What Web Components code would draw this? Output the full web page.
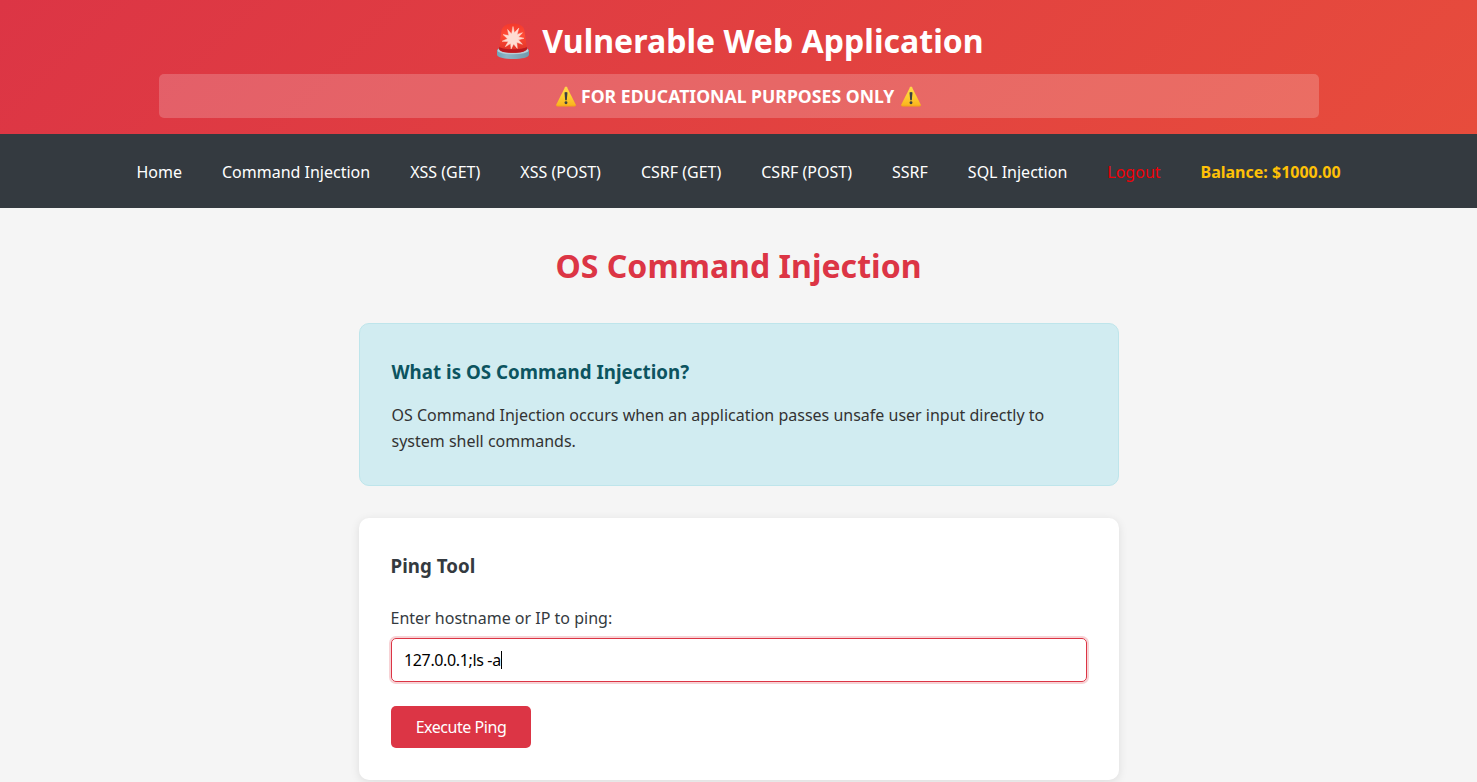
<!DOCTYPE html>
<html lang="en">
<head>
<meta charset="utf-8">
<title>Vulnerable Web Application</title>
<style>
html,body{margin:0;height:100%;overflow:hidden}
body{font:16px/1.6 "Noto Sans",sans-serif;color:#333;background:#f5f5f5}
</style>
</head>
<body>
<vulnerable-app></vulnerable-app>
<script>
function define(name, html) {
  const template = document.createElement('template');
  template.innerHTML = html;
  customElements.define(name, class extends HTMLElement {
    constructor() {
      super();
      this.attachShadow({ mode: 'open' }).append(template.content.cloneNode(true));
    }
  });
}

define('siren-icon', `
<style>:host{display:inline-block}svg{display:block;width:100%;height:100%}</style>
<svg viewBox="0 0 36 38" aria-hidden="true">
<defs><linearGradient id="g" x2="0" y2="1"><stop stop-color="#f3392d"/><stop offset=".4" stop-color="#ff4b35"/><stop offset="1" stop-color="#dc2f25"/></linearGradient>
<linearGradient id="b"><stop stop-color="#6fa3b7"/><stop offset=".3" stop-color="#8db6c7"/><stop offset="1" stop-color="#7198ab"/></linearGradient></defs>
<path d="M2 29c0-3 7-5 16-5s16 2 16 5v3.500c0 3-7 4.500-16 4.500S2 35.500 2 32.500z" fill="url(#b)"/>
<ellipse cx="18" cy="28.500" rx="15.500" ry="3.800" fill="#b9ced7"/>
<path d="M4 26.500 6.500 9C7.400 3.500 12 1.500 18 1.500S28.600 3.500 29.500 9L32 26.500c0 2.800-6 4.300-14 4.300S4 29.300 4 26.500z" fill="url(#g)"/>
<path d="M4.200 25c4 3 23.600 3 27.600 0l.2 1.500c0 2.800-6 4.300-14 4.300S4 29.300 4 26.500z" fill="#b81a21"/>
<path d="m18 4.500 1.400 6.300 4.400-4.700-1.700 6.300 5.400-1.700-4 4.200 5.500 1.400-5.600 1.500 4 4.500-5.600-2 .5 6.100-3.700-4.500-2.500 5.100-.5-5.500-5.300 3.200 3-5.100-6.200-.3 5.400-2.600-4.400-4.100 5.800 1-1.300-6.100 4 4.500z" fill="#ffdcd2" stroke="#ffdcd2" stroke-width=".5"/>
</svg>`);

define('warning-icon', `
<style>:host{display:block;width:22px;height:21px;margin-top:1px}svg{display:block;width:100%;height:100%}</style>
<svg viewBox="0 0 22 21" aria-hidden="true">
<defs><linearGradient id="w" x2="0" y2="1"><stop stop-color="#ffd94a"/><stop offset=".5" stop-color="#ffce31"/><stop offset="1" stop-color="#f9b21d"/></linearGradient></defs>
<path d="M10 1.200q1-1.400 2 0l8.700 17.300q.7 1.800-1.100 1.800H2.400q-1.800 0-1.100-1.800z" fill="url(#w)"/>
<path d="M1.400 19.200q.2.900 1.200.9h16.800q1 0 1.200-.9" fill="none" stroke="#f19c17" stroke-width=".7"/>
<path d="M9.500 6.500q1.500-1 3 0l-.7 7.700h-1.600z" fill="#3c4043"/><circle cx="11" cy="16.700" r="1.450" fill="#3c4043"/>
</svg>`);

define('app-header', `
<style>
:host{display:block;box-sizing:border-box;height:134px;padding:15px 20px 16px;background:linear-gradient(135deg,#dc3545,#e74c3c);color:#fff;text-align:center}
h1{display:flex;align-items:center;justify-content:center;height:51px;margin:0 0 8px;padding-left:2px;font-size:32px;line-height:51px;letter-spacing:.04px}
siren-icon{width:36px;height:38px;margin-right:11px;margin-top:1px}
.warning{box-sizing:border-box;display:flex;align-items:center;justify-content:center;gap:4px;max-width:1160px;height:44px;margin:0 auto;padding:8px;border-radius:5px;background:rgba(255,255,255,.2);font-size:17.6px;line-height:28px;font-weight:700}
.warning span{display:block;width:315px;white-space:nowrap;text-align:left;letter-spacing:.02px}
</style>
<h1><siren-icon></siren-icon><span>Vulnerable Web Application</span></h1>
<div class="warning"><warning-icon></warning-icon><span>FOR EDUCATIONAL PURPOSES ONLY</span><warning-icon></warning-icon></div>`);

define('nav-item', `
<style>
:host{display:block;padding:8px;color:#fff;white-space:nowrap}
:host([kind=logout]){color:#f00008}
:host([kind=balance]){color:#ffc107;font-weight:700}
</style><slot></slot>`);

define('app-nav', `
<style>:host{display:flex;box-sizing:border-box;height:74px;padding:18px 0 14px;justify-content:center;gap:24px;background:#343a40}</style>
<slot></slot>`);

define('info-card', `
<style>
:host{display:block;padding:33px 32px 31px;border:1px solid #bee5eb;border-radius:10px;background:#d1ecf1}
h3{margin:0 0 16px;color:#0c5460;font-size:18.72px;line-height:30px;letter-spacing:.03px}
p{margin:0;line-height:25.6px}
h3,p{margin-left:-.5px}
</style>
<h3><slot name="title"></slot></h3><p><slot></slot></p>`);

define('ping-form', `
<style>
:host{display:block;margin-top:32px;padding:33px 32px 32px;border-radius:10px;background:#fff;box-shadow:0 2px 10px rgba(0,0,0,.1)}
h3{margin:0 0 24px;color:#343a40;font-size:18.72px;line-height:30px;letter-spacing:.03px}
label{display:block;margin-bottom:7px;color:#343a40;line-height:26px}
h3,label{margin-left:-.5px}
.field{box-sizing:border-box;display:flex;align-items:center;height:44px;padding:0 12px;border:1px solid #dc3545;border-radius:5px;box-shadow:0 0 0 2px rgba(220,53,69,.22);color:#000;white-space:pre}
.value{letter-spacing:-.36px;padding-top:2px}
.caret{width:1px;height:18px;background:#000}
button{display:block;box-sizing:border-box;width:140px;height:42px;margin-top:24px;padding:0;border:0;border-radius:5px;background:#dc3545;color:#fff;font:400 16px "Noto Sans",sans-serif;letter-spacing:-.45px}
</style>
<h3>Ping Tool</h3>
<label>Enter hostname or IP to ping:</label>
<div class="field"><span class="value">127.0.0.1;ls -a</span><span class="caret"></span></div>
<button>Execute Ping</button>`);

define('vulnerable-app', `
<style>
:host{display:block}
main{width:760px;margin:0 auto;padding:32px 0 0 1px}
h1{margin:0 1px 32px 0;color:#dc3545;font-size:32px;line-height:51px;text-align:center;letter-spacing:.04px}
</style>
<app-header></app-header>
<app-nav>
<nav-item>Home</nav-item><nav-item>Command Injection</nav-item><nav-item>XSS (GET)</nav-item><nav-item>XSS (POST)</nav-item><nav-item>CSRF (GET)</nav-item><nav-item>CSRF (POST)</nav-item><nav-item>SSRF</nav-item><nav-item>SQL Injection</nav-item><nav-item kind="logout">Logout</nav-item><nav-item kind="balance">Balance: $1000.00</nav-item>
</app-nav>
<main>
<h1>OS Command Injection</h1>
<info-card><span slot="title">What is OS Command Injection?</span>OS Command Injection occurs when an application passes unsafe user input directly to system shell commands.</info-card>
<ping-form></ping-form>
</main>`);
</script>
</body>
</html>
